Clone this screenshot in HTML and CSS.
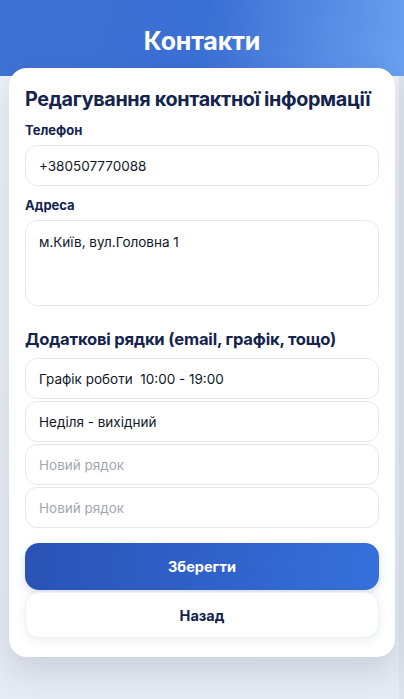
FILE: index.html
```html
<!DOCTYPE html>
<html lang="uk">
<head>
    <meta charset="UTF-8">
    <meta name="viewport" content="width=device-width, initial-scale=1.0">
    <title>Контакти</title>
    <link rel="stylesheet" href="styles.css">
</head>
<body>
    <div class="page">
        <header class="topbar">
            <h1>Контакти</h1>
        </header>

        <main class="card">
            <h2 class="card-title">Редагування контактної інформації</h2>

            <label class="field-label" for="phone">Телефон</label>
            <input id="phone" class="field" type="text" value="+380507770088">

            <label class="field-label" for="address">Адреса</label>
            <textarea id="address" class="field field-area">м.Київ, вул.Головна 1</textarea>

            <h3 class="section-title">Додаткові рядки (email, графік, тощо)</h3>
            <div class="extra-rows">
                <input class="field" type="text" value="Графік роботи  10:00 - 19:00">
                <input class="field" type="text" value="Неділя - вихідний">
                <input class="field" type="text" placeholder="Новий рядок">
                <input class="field" type="text" placeholder="Новий рядок">
            </div>

            <div class="actions">
                <button class="btn btn-primary">Зберегти</button>
                <button class="btn btn-secondary">Назад</button>
            </div>
        </main>
    </div>
</body>
</html>
```

FILE: styles.css
```css
* {
    margin: 0;
    padding: 0;
    box-sizing: border-box;
}

body {
    font-family: Inter, 'Noto Sans', sans-serif;
    background: linear-gradient(180deg, #eef1f6 0%, #e6eaf2 100%);
    color: #111827;
    min-height: 100vh;
    box-shadow: inset -5px 0 0 #dde2ea;
}

.page {
    min-height: 699px;
}

.topbar {
    height: 76px;
    background: linear-gradient(100deg, #3f72d2 0%, #3a6fd4 50%, #6aa0ee 100%);
    display: flex;
    justify-content: center;
    padding-top: 24px;
}

.topbar h1 {
    color: #ffffff;
    font-size: 25px;
    font-weight: 700;
    letter-spacing: -0.2px;
    line-height: 34px;
}

.card {
    margin: -8px 9px 0 9px;
    width: 386px;
    background: #ffffff;
    border-radius: 18px;
    padding: 18px 16px 19px 16px;
    box-shadow: 0 14px 30px rgba(30, 50, 90, 0.14);
    position: relative;
    display: flex;
    flex-direction: column;
}

.card-title {
    font-size: 19.8px;
    font-weight: 700;
    color: #14244d;
    letter-spacing: -0.35px;
    line-height: 26px;
    margin-bottom: 10px;
}

.field-label {
    font-size: 13px;
    font-weight: 700;
    color: #14244d;
    line-height: 16px;
    margin-bottom: 7px;
}

.field {
    width: 100%;
    height: 41px;
    border: 1px solid #e3e8f0;
    border-radius: 12px;
    padding: 0 13px;
    font-family: inherit;
    font-size: 13.5px;
    color: #111827;
    background: #ffffff;
    outline: none;
}

.field::placeholder {
    color: #a3a8b0;
}

.field + .field-label {
    margin-top: 11px;
}

.field-area {
    height: 86px;
    padding-top: 12px;
    resize: none;
    line-height: 18px;
}

.section-title {
    font-size: 16.6px;
    font-weight: 700;
    color: #14244d;
    letter-spacing: -0.2px;
    line-height: 22px;
    margin-top: 22px;
    margin-bottom: 8px;
}

.extra-rows {
    display: flex;
    flex-direction: column;
    gap: 2px;
}

.actions {
    display: flex;
    flex-direction: column;
    gap: 2px;
    margin-top: 15px;
}

.btn {
    width: 100%;
    height: 47px;
    border: none;
    border-radius: 14px;
    font-family: inherit;
    font-size: 14.5px;
    font-weight: 700;
    cursor: pointer;
}

.btn-primary {
    background: linear-gradient(100deg, #2a52b5 0%, #3670da 100%);
    color: #ffffff;
    box-shadow: 0 4px 10px rgba(42, 82, 181, 0.18);
}

.btn-secondary {
    height: 46px;
    background: #ffffff;
    color: #14244d;
    border: 1px solid #eef1f5;
    box-shadow: 0 3px 10px rgba(30, 50, 90, 0.08);
}
```
